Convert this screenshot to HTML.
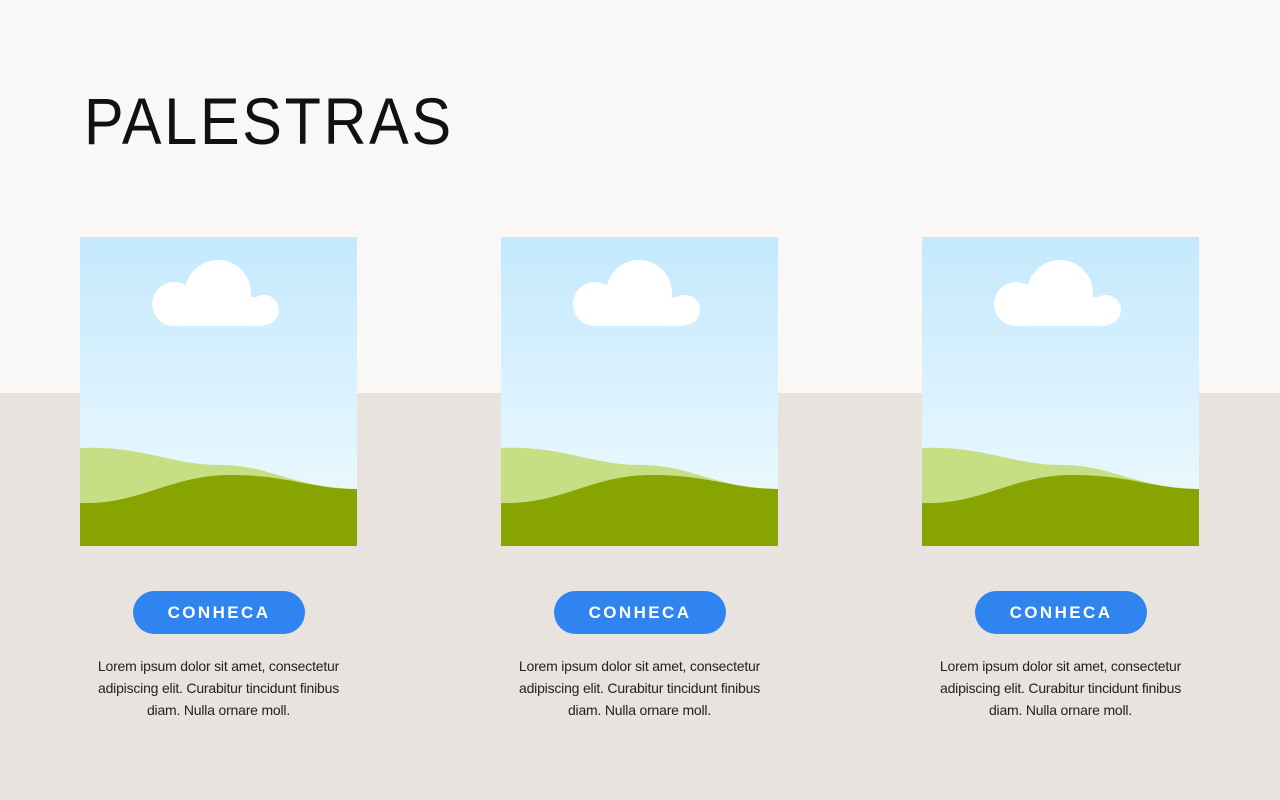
<!DOCTYPE html>
<html><head><style>
body{margin:0;width:1280px;height:800px;position:relative;background:#f9f8f6;font-family:"Liberation Sans",sans-serif;overflow:hidden}
.bot{position:absolute;left:0;top:393px;width:1280px;height:407px;background:#e8e3df}
h1{position:absolute;left:84px;top:83px;margin:0;font-weight:normal;font-size:66px;letter-spacing:3px;color:#111;line-height:76px;transform:scaleX(0.9);transform-origin:0 0}
.card{position:absolute;top:237px;width:277px}
.card svg{display:block}
.btn{position:absolute;left:53px;top:354px;width:172px;height:43px;border-radius:22px;background:#2f84ef;color:#fff;font-size:17px;font-weight:bold;letter-spacing:2.4px;text-align:center;line-height:43px}
.txt{position:absolute;left:4px;top:418px;width:269px;text-align:center;font-size:14px;letter-spacing:-0.2px;line-height:22px;color:#222}
</style></head><body>
<div class="bot"></div>
<h1>PALESTRAS</h1>
<div class="card" style="left:80px"><svg width="277" height="309"><defs><linearGradient id="g" x1="0" y1="0" x2="0" y2="1"><stop offset="0" stop-color="#c4e9fd"/><stop offset="1" stop-color="#f1fbff"/></linearGradient></defs><rect width="277" height="309" fill="url(#g)"/><circle cx="94" cy="67" r="22" fill="#fff"/><circle cx="138" cy="56" r="33" fill="#fff"/><circle cx="184" cy="73" r="15" fill="#fff"/><rect x="94" y="60" width="90" height="29" fill="#fff"/><path d="M0 211C60 208 90 228 140 228C190 228 210 250 277 252V309H0Z" fill="#c6df84"/><path d="M0 266C60 268 90 238 150 238C210 238 230 252 277 252V309H0Z" fill="#88a400"/></svg><div class="btn">CONHECA</div><div class="txt">Lorem ipsum dolor sit amet, consectetur adipiscing elit. Curabitur tincidunt finibus diam. Nulla ornare moll.</div></div>
<div class="card" style="left:501px"><svg width="277" height="309"><rect width="277" height="309" fill="url(#g)"/><circle cx="94" cy="67" r="22" fill="#fff"/><circle cx="138" cy="56" r="33" fill="#fff"/><circle cx="184" cy="73" r="15" fill="#fff"/><rect x="94" y="60" width="90" height="29" fill="#fff"/><path d="M0 211C60 208 90 228 140 228C190 228 210 250 277 252V309H0Z" fill="#c6df84"/><path d="M0 266C60 268 90 238 150 238C210 238 230 252 277 252V309H0Z" fill="#88a400"/></svg><div class="btn">CONHECA</div><div class="txt">Lorem ipsum dolor sit amet, consectetur adipiscing elit. Curabitur tincidunt finibus diam. Nulla ornare moll.</div></div>
<div class="card" style="left:922px"><svg width="277" height="309"><rect width="277" height="309" fill="url(#g)"/><circle cx="94" cy="67" r="22" fill="#fff"/><circle cx="138" cy="56" r="33" fill="#fff"/><circle cx="184" cy="73" r="15" fill="#fff"/><rect x="94" y="60" width="90" height="29" fill="#fff"/><path d="M0 211C60 208 90 228 140 228C190 228 210 250 277 252V309H0Z" fill="#c6df84"/><path d="M0 266C60 268 90 238 150 238C210 238 230 252 277 252V309H0Z" fill="#88a400"/></svg><div class="btn">CONHECA</div><div class="txt">Lorem ipsum dolor sit amet, consectetur adipiscing elit. Curabitur tincidunt finibus diam. Nulla ornare moll.</div></div>
</body></html>
